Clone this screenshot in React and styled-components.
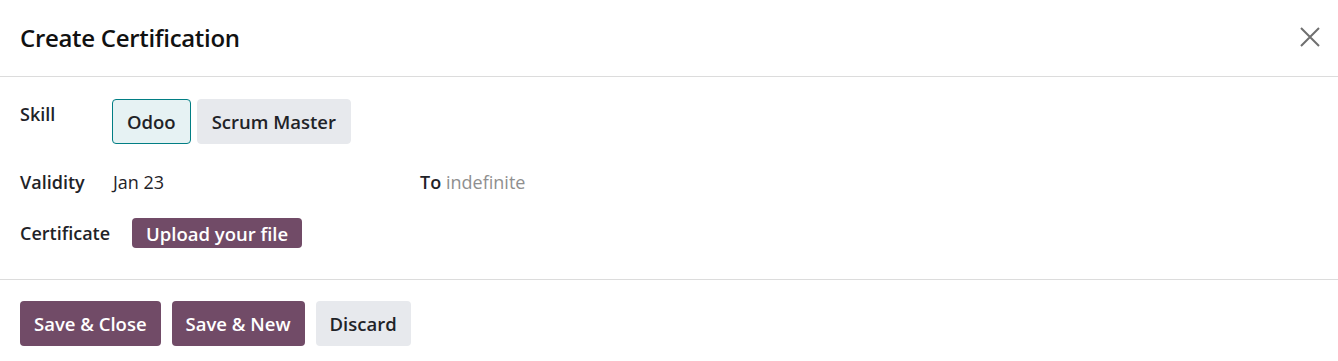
import React from "react";
import styled, { createGlobalStyle } from "styled-components";

const GlobalStyle = createGlobalStyle`
  body {
    margin: 0;
    background: #fff;
    font-family: "Open Sans", "Noto Sans", sans-serif;
    color: #1f2328;
  }
`;

const Dialog = styled.div`
  width: 1338px;
  height: 361px;
  background: #fff;
  display: flex;
  flex-direction: column;
`;

const Header = styled.header`
  height: 77px;
  border-bottom: 1px solid #dcdcdc;
  display: flex;
  align-items: center;
  justify-content: space-between;
  padding: 0 16px 2px 20px;
  box-sizing: border-box;
`;

const Title = styled.h4`
  margin: 0;
  font-size: 24px;
  font-weight: 600;
  letter-spacing: -0.3px;
  color: #111;
`;

const CloseButton = styled.button`
  border: 0;
  background: none;
  padding: 0;
  width: 24px;
  height: 24px;
  display: flex;
  align-items: center;
  justify-content: center;
  cursor: pointer;
`;

const Body = styled.div`
  padding: 22px 20px 0;
  height: 203px;
  box-sizing: border-box;
  border-bottom: 1px solid #dcdcdc;
  display: flex;
  flex-direction: column;
`;

const Row = styled.div`
  display: flex;
  align-items: ${(p) => p.$align || "center"};
  margin-bottom: ${(p) => p.$gap || 0}px;
`;

const Label = styled.span`
  font-size: 18px;
  font-weight: 600;
  width: ${(p) => p.$width}px;
  flex-shrink: 0;
  color: #1f2328;
  ${(p) => p.$padTop && `padding-top: ${p.$padTop}px;`}
`;

const Pills = styled.div`
  display: flex;
  gap: 6px;
`;

const Pill = styled.button`
  height: 45px;
  padding: 0 14px;
  font-family: inherit;
  font-size: 18.5px;
  font-weight: 600;
  color: #1f2328;
  border-radius: 4px;
  border: 1px solid ${(p) => (p.$active ? "#017e84" : "#e7e9ed")};
  background: ${(p) => (p.$active ? "#e6f2f3" : "#e7e9ed")};
`;

const Value = styled.span`
  font-size: 18px;
  color: ${(p) => (p.$muted ? "#8f8f8f" : "#1f2328")};
  width: ${(p) => (p.$width ? `${p.$width}px` : "auto")};
`;

const Upload = styled.button`
  height: 30px;
  padding: 0 14px;
  border: 0;
  border-radius: 4px;
  background: #714b67;
  color: #fff;
  font-family: inherit;
  font-size: 18.5px;
  font-weight: 600;
`;

const Footer = styled.footer`
  display: flex;
  gap: 11px;
  padding: 21px 20px 0;
`;

const Button = styled.button`
  height: 45px;
  padding: 0 14px;
  border: 0;
  border-radius: 4px;
  font-family: inherit;
  font-size: 18.5px;
  font-weight: 600;
  background: ${(p) => (p.$primary ? "#714b67" : "#e7e9ed")};
  color: ${(p) => (p.$primary ? "#fff" : "#1f2328")};
`;

export default function App() {
  return (
    <>
      <GlobalStyle />
      <Dialog>
        <Header>
          <Title>Create Certification</Title>
          <CloseButton aria-label="Close">
            <svg width="22" height="22" viewBox="0 0 22 22">
              <path d="M2 2 L20 20 M20 2 L2 20" stroke="#6f6f6f" strokeWidth="2" />
            </svg>
          </CloseButton>
        </Header>
        <Body>
          <Row $align="flex-start" $gap={26}>
            <Label $width={92} $padTop={3}>Skill</Label>
            <Pills>
              <Pill $active>Odoo</Pill>
              <Pill>Scrum Master</Pill>
            </Pills>
          </Row>
          <Row $gap={24}>
            <Label $width={93}>Validity</Label>
            <Value $width={307}>Jan 23</Value>
            <Label $width={26}>To</Label>
            <Value $muted>indefinite</Value>
          </Row>
          <Row>
            <Label $width={112}>Certificate</Label>
            <Upload>Upload your file</Upload>
          </Row>
        </Body>
        <Footer>
          <Button $primary>Save &amp; Close</Button>
          <Button $primary>Save &amp; New</Button>
          <Button>Discard</Button>
        </Footer>
      </Dialog>
    </>
  );
}
